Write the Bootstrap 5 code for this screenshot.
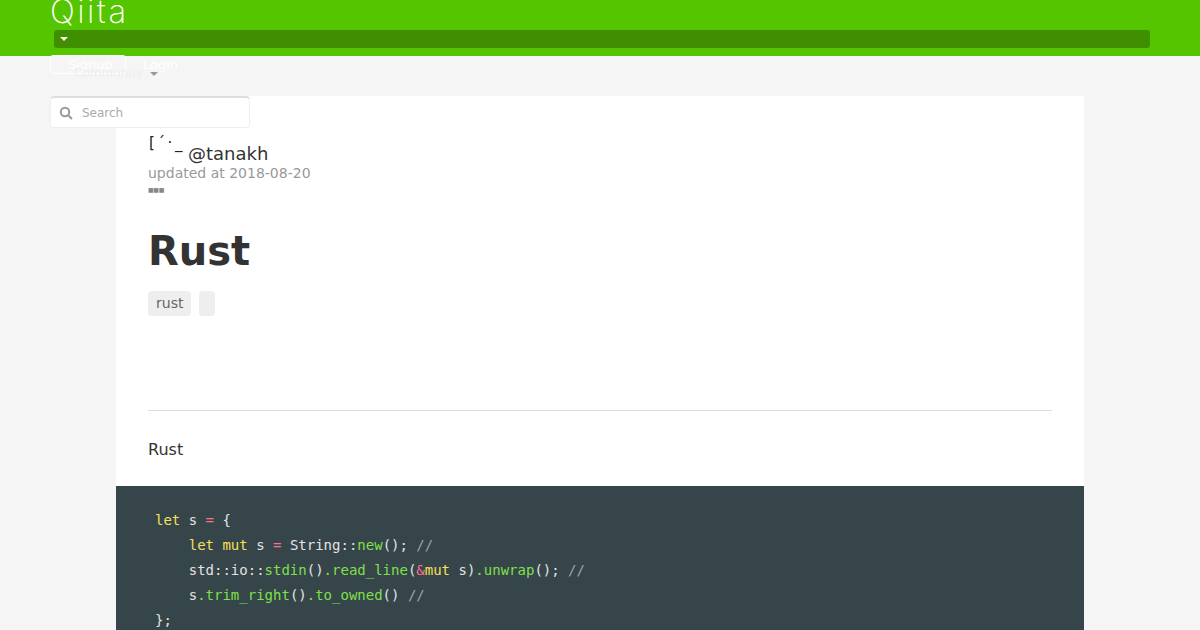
<!DOCTYPE html>
<html lang="en">
<head>
<meta charset="utf-8">
<title>Rust</title>
<link rel="stylesheet" href="https://cdn.jsdelivr.net/npm/bootstrap@5.3.0/dist/css/bootstrap.min.css">
<style>
html,body{height:630px;overflow:hidden}
body{background:#f5f5f5;font-family:"DejaVu Sans",sans-serif;color:#333}
.topbar{height:56px;background:#55c500;padding-left:50px}
.brand{display:block;height:30px;line-height:23px;font-family:Inter,sans-serif;font-weight:200;font-size:33px;color:#fff;text-decoration:none;letter-spacing:2.4px}
.menubar{height:18px;margin:0 50px 0 4px;background:#3f8f00;border-radius:3px;padding-left:6px}
.menucaret{width:0;height:0;border:4px solid transparent;border-top-color:#fff;border-bottom:0}
.authrow{height:18px;margin-top:7px}
.signupbtn{width:76px;height:19px;border:1px solid #fff;border-radius:3px;color:#fff;font-size:13px;line-height:17px;padding:0 0 0 17px;text-decoration:none}
.loginlink{margin-left:17px;color:#fff;font-size:13px;line-height:17px;text-decoration:none}
.communityrow{height:1px;padding-left:24px;font-size:12px;line-height:1px;color:#eee}
.communitycaret{margin-left:7px;width:0;height:0;border:4px solid transparent;border-top-color:#999;border-bottom:0}
.searchbox{width:200px;height:32px;margin-top:22px;background:#fff;border:1px solid #eee;border-top:2px solid #ddd;border-radius:4px;padding-left:8px;position:relative;z-index:2}
.searchtext{font-size:12px;color:#aaa;margin-left:9px}
.sheet{width:968px;margin:40px auto 0 116px;background:#fff;height:600px;overflow:hidden}
.sheetinner{padding:36px 32px 0}
.identity{height:32px}
.avatarmark{width:40px;height:32px;margin-top:-2px;padding-left:1px;font-size:15px;line-height:26px;letter-spacing:2.6px;color:#222;white-space:pre}
.username{font-size:18px;line-height:24px;color:#333;margin-top:10px}
.updated{font-size:14px;line-height:20px;margin-top:-1px;color:#999}
.dots{font-size:6px;line-height:10px;height:14px;margin-top:2px;color:#888;letter-spacing:-.3px}
.arttitle{font-size:40px;font-weight:700;line-height:48px;margin:28px 0 16px;color:#333}
.tagpill{height:25px;min-width:16px;background:#eee;border-radius:4px;padding:0 8px;font-size:14px;line-height:25px;color:#666}
.rule{margin:94px 0 27px;border:0;border-top:1px solid #ddd;opacity:1}
.para{font-size:16px;line-height:24px;color:#333;margin:0 0 24px}
.codeblock{background:#364549;color:#e3e3e3;font-family:"DejaVu Sans Mono",monospace;font-size:14px;line-height:25px;padding:22px 0 0 39px;margin:0;height:200px;border-radius:0;overflow:hidden}
.kw{color:#f4e05a}.op{color:#ff6e8a}.fn{color:#7ee04a}.cm{color:#99a5a8}
</style>
</head>
<body>
<header class="topbar">
  <a class="brand" href="#">Qiita</a>
  <div class="menubar d-flex align-items-center"><span class="menucaret"></span></div>
  <div class="authrow d-flex align-items-center">
    <a class="signupbtn" href="#">Signup</a>
    <a class="loginlink" href="#">Login</a>
  </div>
  <div class="communityrow d-flex align-items-center">Community<span class="communitycaret"></span></div>
  <div class="searchbox d-flex align-items-center">
    <svg width="14" height="14" viewBox="0 0 14 14" fill="none" stroke="#999" stroke-width="2"><circle cx="6" cy="6" r="4.2"/><path d="M9 9l4 4"/></svg>
    <span class="searchtext">Search</span>
  </div>
</header>
<main class="sheet">
  <div class="sheetinner">
    <div class="identity d-flex">
      <div class="avatarmark">[´·_</div>
      <div class="username">@tanakh</div>
    </div>
    <div class="updated">updated at 2018-08-20</div>
    <div class="dots">■■■</div>
    <h1 class="arttitle">Rust</h1>
    <div class="d-flex gap-2">
      <span class="tagpill">rust</span>
      <span class="tagpill"></span>
    </div>
    <hr class="rule">
    <p class="para">Rust</p>
  </div>
  <pre class="codeblock"><span class="kw">let</span> s <span class="op">=</span> {
    <span class="kw">let mut</span> s <span class="op">=</span> String::<span class="fn">new</span>(); <span class="cm">//</span>
    std::io::<span class="fn">stdin</span>()<span class="fn">.read_line</span>(<span class="op">&amp;</span><span class="kw">mut</span> s)<span class="fn">.unwrap</span>(); <span class="cm">//</span>
    s<span class="fn">.trim_right</span>()<span class="fn">.to_owned</span>() <span class="cm">//</span>
};</pre>
</main>
<script src="https://cdn.jsdelivr.net/npm/bootstrap@5.3.0/dist/js/bootstrap.bundle.min.js"></script>
</body>
</html>
